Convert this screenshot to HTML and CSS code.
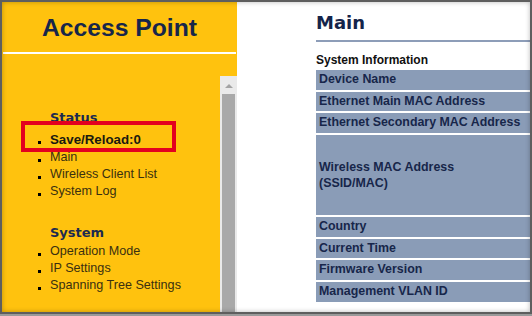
FILE: index.html
```html
<!DOCTYPE html>
<html>
	<head>
		<meta charset="UTF-8">
		<title>Access Point</title>
		<link rel="stylesheet" href="styles.css">
	</head>
	<body>
		<div class="frame">
			<aside class="side">
				<div class="brand">Access Point</div>
				<div class="side-body">
					<nav class="menu">
						<h4>Status</h4>
						<ul>
							<li class="strong">Save/Reload:0</li>
							<li>Main</li>
							<li>Wireless Client List</li>
							<li>System Log</li>
						</ul>
						<h4 class="gap">System</h4>
						<ul>
							<li>Operation Mode</li>
							<li>IP Settings</li>
							<li>Spanning Tree Settings</li>
						</ul>
						<div class="mark"></div>
					</nav>
					<div class="scrollbar">
						<span class="arrow"></span>
						<span class="thumb"></span>
					</div>
				</div>
			</aside>
			<main class="content">
				<h1>Main</h1>
				<h5>System Information</h5>
				<div class="rows">
					<div class="row">Device Name</div>
					<div class="row">Ethernet Main MAC Address</div>
					<div class="row">Ethernet Secondary MAC Address</div>
					<div class="row tall">Wireless MAC Address<br>(SSID/MAC)</div>
					<div class="row">Country</div>
					<div class="row">Current Time</div>
					<div class="row">Firmware Version</div>
					<div class="row">Management VLAN ID</div>
				</div>
			</main>
		</div>
	</body>
</html>
```

FILE: styles.css
```css
body{
    margin: 0;
    padding: 0;
    background: #9a9a9a;
    font-family: 'Liberation Sans', Arial, sans-serif;
}
.frame{
    width: 532px;
    height: 314px;
    box-sizing: border-box;
    border: 2px solid #5e5e5e;
    display: flex;
    position: relative;
    overflow: hidden;
    background: #fff;
}
.frame::after{
    content: "";
    position: absolute;
    inset: 0;
    box-shadow: inset 0 0 5px rgba(0,0,0,0.28);
    pointer-events: none;
}
.side{
    width: 235px;
    flex: none;
    background: #ffc20e;
    display: flex;
    flex-direction: column;
}
.brand{
    height: 50px;
    line-height: 51px;
    text-align: center;
    font-size: 24.7px;
    font-weight: bold;
    color: #17264a;
    border-bottom: 2px solid #fff;
    margin: 0 1px 0 1px;
}
.side-body{
    flex: 1;
    display: flex;
    margin-top: 22px;
}
.menu{
    flex: 1;
    position: relative;
    padding: 33px 0 0 36px;
}
.menu h4{
    margin: 0 0 4px 12px;
    font-family: 'DejaVu Sans', Verdana, sans-serif;
    font-size: 13px;
    line-height: 18px;
    color: #1c2a50;
}
.menu h4.gap{
    margin-top: 24px;
    margin-bottom: 1px;
}
.menu ul{
    list-style: none;
    margin: 0;
    padding: 0;
}
.menu li{
    font-size: 12.6px;
    line-height: 17px;
    color: #3a3010;
    display: flex;
    align-items: center;
    gap: 9px;
}
.menu li::before{
    content: "";
    width: 3px;
    height: 3px;
    background: #000;
    margin-top: 5px;
}
.menu li.strong{
    font-weight: bold;
    font-size: 13.3px;
    color: #1a1a10;
    line-height: 18px;
}
.mark{
    position: absolute;
    left: 19px;
    top: 45px;
    width: 147px;
    height: 23px;
    border: 4px solid #e3001f;
}
.scrollbar{
    width: 17px;
    flex: none;
    background: #eaeaea;
    display: flex;
    flex-direction: column;
    align-items: center;
}
.arrow{
    margin-top: 8px;
    width: 0;
    height: 0;
    border-left: 4px solid transparent;
    border-right: 4px solid transparent;
    border-bottom: 4px solid #a3a3a3;
}
.thumb{
    margin-top: 6px;
    flex: 1;
    width: 13px;
    background: #a9a9a9;
}
.content{
    flex: 1;
    padding-left: 79px;
}
.content h1{
    margin: 0;
    padding-top: 10px;
    height: 28px;
    line-height: 22px;
    font-family: 'DejaVu Sans', Verdana, sans-serif;
    font-size: 18px;
    color: #14244a;
    border-bottom: 2px solid #8d9db8;
}
.content h5{
    margin: 0;
    padding-top: 10px;
    height: 18px;
    font-size: 12px;
    line-height: 16px;
    color: #101010;
}
.rows{
    display: flex;
    flex-direction: column;
    gap: 2px;
}
.row{
    height: 19.7px;
    box-sizing: border-box;
    padding-left: 3px;
    background: #8a9cb7;
    font-size: 12.4px;
    font-weight: bold;
    line-height: 19.7px;
    color: #17264a;
}
.row.tall{
    height: 80px;
    line-height: 16px;
    display: flex;
    align-items: center;
}
```
